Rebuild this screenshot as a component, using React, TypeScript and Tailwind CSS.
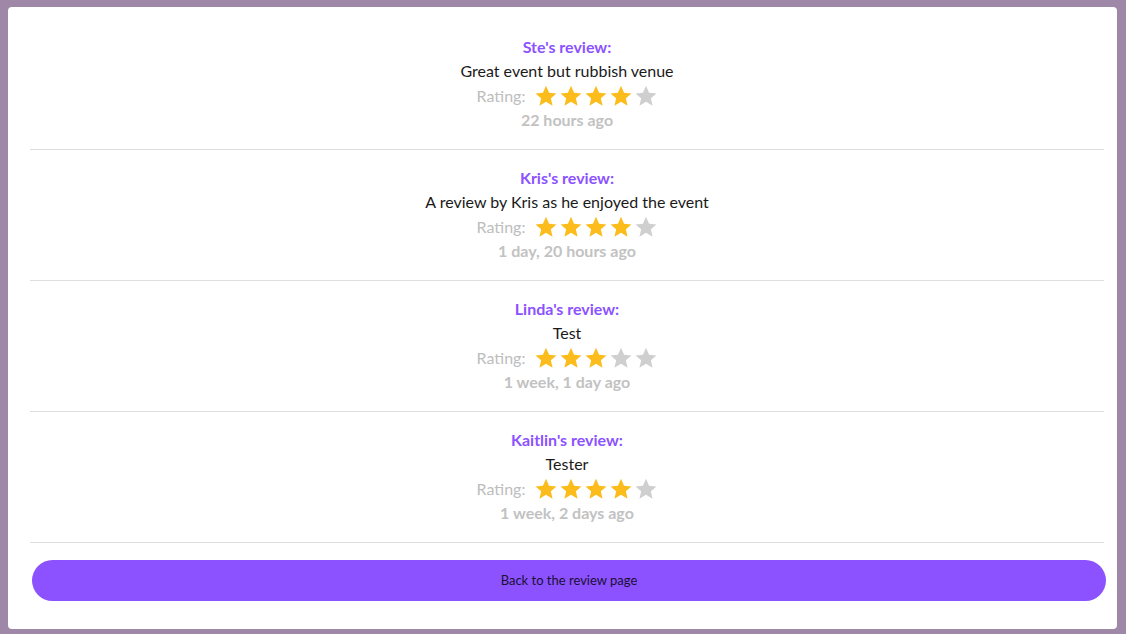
import React from 'react';

const reviews = [
  { name: "Ste's review:", text: 'Great event but rubbish venue', rating: 4, when: '22 hours ago' },
  { name: "Kris's review:", text: 'A review by Kris as he enjoyed the event', rating: 4, when: '1 day, 20 hours ago' },
  { name: "Linda's review:", text: 'Test', rating: 3, when: '1 week, 1 day ago' },
  { name: "Kaitlin's review:", text: 'Tester', rating: 4, when: '1 week, 2 days ago' },
];

const Star = ({ on }: { on: boolean }) => (
  <svg viewBox="0 0 24 24" className="w-[24px] h-[24px] -mx-[0.5px]">
    <path
      d="M12 1.8l3.05 6.9 7.45.7-5.65 4.95 1.7 7.35L12 17.85 5.45 21.7l1.7-7.35L1.5 9.4l7.45-.7z"
      fill={on ? '#fbbc1c' : '#cfcfcf'}
    />
  </svg>
);

const App = () => {
  return (
    <div className="min-h-[634px] bg-[#9e87a7] pt-[7px] pl-[8px]" style={{ fontFamily: 'Lato, "Noto Sans", sans-serif' }}>
      <div className="w-[1109px] h-[622px] bg-white rounded-[4px] pt-[12px] pl-[22px] pr-[13px]">
        {reviews.map((r, i) => (
          <div key={i} className="border-b border-[#dedede] pt-[16px] pb-[17px] flex flex-col items-center">
            <div className="h-[24px] leading-[24px] text-[16px] font-bold text-[#8c52ff]">{r.name}</div>
            <div className="h-[24px] leading-[24px] text-[16px] text-[#1a1a1a]">{r.text}</div>
            <div className="h-[25px] flex items-center gap-[2px]">
              <span className="text-[16px] text-[#bdbdbd] mr-[7px]">Rating:</span>
              {[1, 2, 3, 4, 5].map((n) => (
                <Star key={n} on={n <= r.rating} />
              ))}
            </div>
            <div className="h-[24px] leading-[24px] text-[16px] font-bold text-[#c2c2c2]">{r.when}</div>
          </div>
        ))}
        <div className="pt-[17px] pl-[2px]">
          <button className="w-[1074px] h-[41px] rounded-full bg-[#8c52ff] text-[13px] text-[#1a1033]">
            Back to the review page
          </button>
        </div>
      </div>
    </div>
  );
};

export default App;
